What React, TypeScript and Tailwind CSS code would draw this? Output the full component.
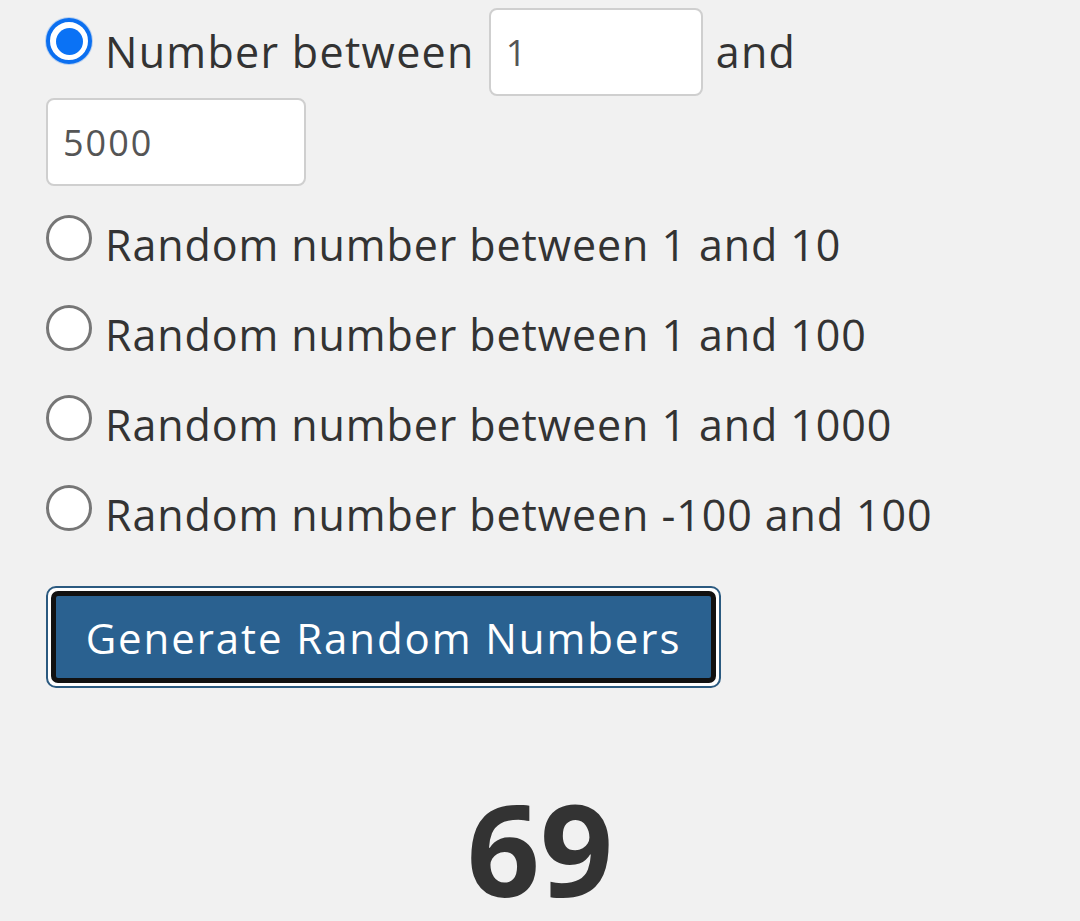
const font = { fontFamily: '"Open Sans", "Noto Sans", sans-serif' };

const Radio = ({ checked }: { checked?: boolean }) =>
  checked ? (
    <span className="flex h-[46px] w-[46px] shrink-0 items-center justify-center rounded-full border-[4px] border-[#0b6ff0] bg-white shadow-[0_0_0_1px_rgba(11,111,240,0.25)]">
      <span className="block h-[27px] w-[27px] rounded-full bg-[#0a72f5]" />
    </span>
  ) : (
    <span className="block h-[46px] w-[46px] shrink-0 rounded-full border-[3px] border-[#767676] bg-white" />
  );

const options = [
  "Random number between 1 and 10",
  "Random number between 1 and 100",
  "Random number between 1 and 1000",
  "Random number between -100 and 100",
];

export default function App() {
  return (
    <div className="min-h-[921px] w-full overflow-hidden bg-[#f1f1f1] pl-[46px] pt-[8px] text-[#333]" style={font}>
      <div className="flex h-[88px] items-center">
        <span className="mb-[22px] block">
          <Radio checked />
        </span>
        <span className="ml-[13px] text-[43px] leading-[50px] tracking-[1.3px]">Number between</span>
        <input
          defaultValue="1"
          className="ml-[14px] h-[88px] w-[214px] rounded-[8px] border-2 border-[#cfcfcf] bg-white px-[15px] text-[36px] tracking-[2px] text-[#555] outline-none"
          style={font}
        />
        <span className="ml-[13px] text-[43px] leading-[50px] tracking-[1.3px]">and</span>
      </div>
      <input
        defaultValue="5000"
        className="mt-[2px] block h-[88px] w-[260px] rounded-[8px] border-2 border-[#cfcfcf] bg-white px-[15px] text-[36px] tracking-[2px] text-[#555] outline-none"
        style={font}
      />
      <div className="mt-[7px]">
        {options.map((o) => (
          <label key={o} className="flex h-[90px] items-start">
            <span className="mt-[22px] block">
              <Radio />
            </span>
            <span className="ml-[13px] mt-[27px] text-[43px] leading-[50px] tracking-[0.9px]">{o}</span>
          </label>
        ))}
      </div>
      <div className="mt-[33px] h-[102px] w-[675px] rounded-[10px] border-2 border-[#2b5a80] bg-white p-[3px]">
        <button
          className="flex h-full w-full items-center justify-center rounded-[7px] border-[5px] border-[#111] bg-[#2a6190] text-[42px] tracking-[1.9px] text-white"
          style={font}
        >
          Generate Random Numbers
        </button>
      </div>
      <div className="-ml-[46px] mt-[110px] text-center text-[128px] font-bold leading-[100px] text-[#333]">69</div>
    </div>
  );
}
